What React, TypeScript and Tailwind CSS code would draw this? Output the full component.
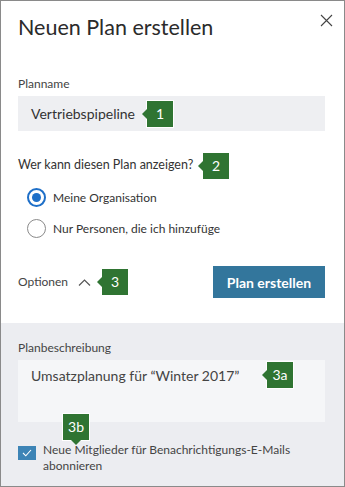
import React from "react";

const font = { fontFamily: 'Lato, "Open Sans", sans-serif' };

function Badge({ label, dir = "left", className = "" }: { label: string; dir?: "left" | "down"; className?: string }) {
  return (
    <div className={`absolute ${className}`}>
      <div className="relative flex h-[26px] min-w-[26px] items-center justify-center bg-[#2f7432] px-[5px] text-[14px] leading-none text-white ring-1 ring-white">
        {label}
        {dir === "left" ? (
          <span className="absolute left-[-5px] top-[8px] h-0 w-0 border-y-[5px] border-r-[5px] border-y-transparent border-r-[#2f7432]" />
        ) : (
          <span className="absolute bottom-[-5px] left-[8px] h-0 w-0 border-x-[5px] border-t-[5px] border-x-transparent border-t-[#2f7432]" />
        )}
      </div>
    </div>
  );
}

function Radio({ checked, label }: { checked?: boolean; label: string }) {
  return (
    <div className="flex h-[19px] items-center gap-[7px]">
      {checked ? (
        <span className="flex h-[19px] w-[19px] items-center justify-center rounded-full border-[2px] border-[#1e6fc8]">
          <span className="h-[9px] w-[9px] rounded-full bg-[#1e6fc8]" />
        </span>
      ) : (
        <span className="h-[19px] w-[19px] rounded-full border border-[#8a8a8a]" />
      )}
      <span className="text-[12px] leading-[16px] text-[#333]">{label}</span>
    </div>
  );
}

export default function App() {
  return (
    <div style={font} className="flex h-[487px] w-[345px] flex-col border border-[#8a8a8a] bg-white text-[#333]">
      <div className="relative pl-[17px] pr-[19px] pt-[12px]">
        <h1 className="text-[21.5px] leading-[28px] text-[#2b2b2b]">Neuen Plan erstellen</h1>
        <button className="absolute right-[11px] top-[13px] text-[#444]">
          <svg width="13" height="13" viewBox="0 0 13 13" stroke="currentColor" strokeWidth="1.1">
            <path d="M1 1 L12 12 M12 1 L1 12" />
          </svg>
        </button>

        <div className="mt-[35px] text-[12px] leading-[16px] text-[#444]">Planname</div>
        <div className="relative mt-[4px] flex h-[35px] items-center bg-[#eeeff2] px-[13px] text-[14px] text-[#333]">
          Vertriebspipeline
          <Badge label="1" className="left-[129px] top-[5px]" />
        </div>

        <div className="relative mt-[25px] text-[12.5px] leading-[18px] text-[#333]">
          Wer kann diesen Plan anzeigen?
          <Badge label="2" className="left-[185px] top-[-3px]" />
        </div>
        <div className="mt-[14px] flex flex-col gap-[12px] pl-[9px]">
          <Radio checked label="Meine Organisation" />
          <Radio label="Nur Personen, die ich hinzufüge" />
        </div>

        <div className="mt-[28px] flex items-center justify-between pb-[25px]">
          <div className="relative flex items-center gap-[10px] text-[12px] leading-[18px] text-[#444]">
            Optionen
            <svg width="13" height="7" viewBox="0 0 13 7" fill="none" stroke="#555" strokeWidth="1.2">
              <path d="M1 6.5 L6.5 1 L12 6.5" />
            </svg>
            <Badge label="3" className="left-[84px] top-[-4px]" />
          </div>
          <button className="flex h-[32px] w-[112px] items-center justify-center bg-[#33769c] text-[14px] font-bold text-white">
            Plan erstellen
          </button>
        </div>
      </div>

      <div className="flex-1 bg-[#ecedf1] pl-[17px] pr-[19px] pt-[17px]">
        <div className="text-[12px] leading-[16px] text-[#444]">Planbeschreibung</div>
        <div className="relative mt-[4px] h-[62px] bg-[#f5f6f8] px-[13px] pt-[6px] text-[14px] leading-[20px] text-[#444]">
          Umsatzplanung für “Winter 2017”
          <Badge label="3a" className="left-[249px] top-[2px]" />
          <Badge label="3b" dir="down" className="left-[45px] top-[54px]" />
        </div>
        <div className="mt-[20px] flex items-start gap-[7px]">
          <span className="mt-[4px] flex h-[14px] w-[18px] shrink-0 items-center justify-center bg-[#3d84b6]">
            <svg width="10" height="8" viewBox="0 0 10 8" fill="none" stroke="white" strokeWidth="1.1">
              <path d="M1 4 L3.8 6.8 L9 1" />
            </svg>
          </span>
          <span className="text-[12px] leading-[16px] text-[#444]">
            Neue Mitglieder für Benachrichtigungs-E-Mails abonnieren
          </span>
        </div>
      </div>
    </div>
  );
}
